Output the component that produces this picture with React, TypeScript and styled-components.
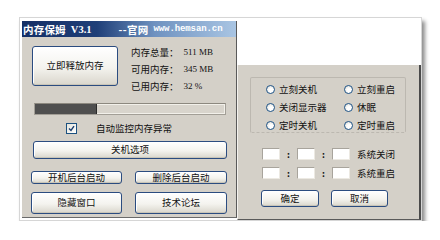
import * as React from 'react';
import styled, { createGlobalStyle } from 'styled-components';

const GlobalStyle = createGlobalStyle`
  body {
    margin: 0;
    background: #ffffff;
    font-family: "Noto Sans CJK SC", "Liberation Sans", sans-serif;
    color: #111111;
  }
`;

const Frame = styled('div')`
  display: flex;
  width: 401px;
  height: 202px;
  margin: 17px 0 0 19px;
  border: 1px solid #d6d6d6;
  background: #ffffff;
  box-shadow: 3px 4px 4px rgba(0, 0, 0, 0.45);
`;

const MainWindow = styled('section')`
  display: flex;
  flex-direction: column;
  width: 215px;
  height: 197px;
  margin: 3px 0 0 2px;
  background: #d4d0c8;
  border-right: 1px solid #5a5a5a;
  border-bottom: 1px solid #6a6a6a;
  box-sizing: border-box;
`;

const TitleBar = styled('div')`
  display: flex;
  align-items: center;
  height: 16px;
  padding-left: 1px;
  background: linear-gradient(to right, #142f66 0%, #1f3f78 35%, #6f92c0 62%, #a9c5e3 100%);
  color: #ffffff;
  font-weight: bold;
  white-space: nowrap;
`;

const TitleName = styled('span')`
  font-size: 10.5px;
  letter-spacing: 0.2px;
`;

const Version = styled('span')`
  margin-left: 5px;
  font-family: "Liberation Serif", serif;
  font-size: 10.5px;
`;

const SiteLabel = styled('span')`
  margin-left: 27px;
  font-size: 10.5px;
  letter-spacing: 0.3px;
`;

const SiteUrl = styled('span')`
  margin-left: 5px;
  font-family: "Liberation Mono", monospace;
  font-size: 9px;
  letter-spacing: -0.1px;
`;

const Body = styled('div')`
  display: flex;
  flex-direction: column;
  padding-top: 9px;
`;

const TopRow = styled('div')`
  display: flex;
  align-items: flex-start;
  padding-left: 10px;
`;

const Button = styled('button')<{ $w: number; $h: number }>`
  display: flex;
  align-items: center;
  justify-content: center;
  width: ${({ $w }) => $w}px;
  height: ${({ $h }) => $h}px;
  padding: 0;
  border: 1px solid #2b4c80;
  border-radius: 3px;
  background: linear-gradient(#ffffff 0%, #f4f3ee 55%, #d9d6cc 100%);
  box-shadow: inset 0 -1px 0 #c9c5b8, inset 1px 1px 0 #ffffff;
  font-family: "Noto Sans CJK SC", sans-serif;
  font-size: 9.5px;
  color: #111111;
  line-height: 1;
  box-sizing: border-box;
`;

const InfoList = styled('div')`
  display: flex;
  flex-direction: column;
  margin: -3px 0 0 13px;
`;

const InfoLine = styled('div')`
  display: flex;
  align-items: center;
  height: 17px;
  font-size: 9.5px;
`;

const InfoValue = styled('span')`
  margin-left: 5px;
  font-family: "Liberation Serif", serif;
  font-size: 9px;
`;

const Progress = styled('div')`
  width: 192px;
  height: 12px;
  margin: 9px 0 0 12px;
  border: 1px solid #a29e96;
  border-top-color: #8c887f;
  background: #d8d4cc;
  box-shadow: inset 0 0 0 1px #f2f0ea;
  box-sizing: border-box;
`;

const ProgressFill = styled('div')`
  height: 100%;
  background: #4f4f4f;
  border-right: 1px solid #2a2a2a;
`;

const CheckRow = styled('label')`
  display: flex;
  align-items: center;
  height: 12px;
  margin: 7px 0 0 44px;
  font-size: 9.5px;
`;

const CheckBox = styled('span')`
  display: flex;
  align-items: center;
  justify-content: center;
  width: 9px;
  height: 9px;
  margin-right: 19px;
  border: 1px solid #1c5180;
  background: linear-gradient(135deg, #e4e4dc, #ffffff);
`;

const WideRow = styled('div')`
  display: flex;
  margin: 7px 0 0 11px;
`;

const PairRow = styled('div')<{ $top: number }>`
  display: flex;
  gap: 13px;
  margin: ${({ $top }) => $top}px 0 0 9px;
`;

const Dialog = styled('section')`
  display: flex;
  flex-direction: column;
  width: 184px;
`;

const Blank = styled('div')`
  height: 47px;
  background: #ffffff;
`;

const DialogBody = styled('div')`
  display: flex;
  flex-direction: column;
  flex: 1;
  background: #d4d0c8;
  border-left: 1px solid #f4f2ee;
  border-right: 2px solid #4a4a4a;
  border-bottom: 1px solid #5a5a5a;
  padding-top: 12px;
`;

const GroupBox = styled('div')`
  display: grid;
  grid-template-columns: 78px 1fr;
  grid-auto-rows: 18px;
  width: 156px;
  height: 56px;
  margin-left: 12px;
  padding: 2px 0 0 15px;
  border: 1px solid #bcb8b0;
  border-bottom-style: dashed;
  border-radius: 2px;
  box-sizing: border-box;
`;

const RadioItem = styled('label')`
  display: flex;
  align-items: center;
  font-size: 9.5px;
`;

const RadioDot = styled('span')`
  width: 9px;
  height: 9px;
  margin-right: 4px;
  border: 1px solid #1f5488;
  border-radius: 50%;
  background: radial-gradient(circle at 60% 65%, #ffffff 30%, #d9d8d0 100%);
  box-sizing: border-box;
`;

const TimeRow = styled('div')<{ $top: number }>`
  display: flex;
  align-items: center;
  height: 12px;
  margin: ${({ $top }) => $top}px 0 0 24px;
  font-size: 9.5px;
`;

const TimeBox = styled('span')`
  width: 18px;
  height: 12px;
  background: #ffffff;
  border: 1px solid #a8a49c;
  border-right-color: #ece9e2;
  border-bottom-color: #ece9e2;
  box-sizing: border-box;
`;

const Colon = styled('span')`
  width: 17px;
  text-align: center;
  font-weight: bold;
  font-size: 9px;
`;

const TimeLabel = styled('span')`
  margin-left: 7px;
`;

const DialogButtons = styled('div')`
  display: flex;
  gap: 12px;
  margin: 11px 0 0 23px;
`;

const CheckMark = () => (
  <svg width="7" height="7" viewBox="0 0 7 7">
    <path d="M1 3.5 L3 5.5 L6 1.2" fill="none" stroke="#1b3e6f" strokeWidth="1.4" />
  </svg>
);

const Radio = ({ label }: { label: string }) => (
  <RadioItem>
    <RadioDot />
    {label}
  </RadioItem>
);

const TimeInput = ({ label, top }: { label: string; top: number }) => (
  <TimeRow $top={top}>
    <TimeBox />
    <Colon>:</Colon>
    <TimeBox />
    <Colon>:</Colon>
    <TimeBox />
    <TimeLabel>{label}</TimeLabel>
  </TimeRow>
);

const stats = { total: 511, free: 345, used: 32 };

const App = () => {
  return (
    <>
      <GlobalStyle />
      <Frame>
        <MainWindow>
          <TitleBar>
            <TitleName>内存保姆</TitleName>
            <Version>V3.1</Version>
            <SiteLabel>--官网</SiteLabel>
            <SiteUrl>www.hemsan.cn</SiteUrl>
          </TitleBar>
          <Body>
            <TopRow>
              <Button $w={86} $h={40}>立即释放内存</Button>
              <InfoList>
                <InfoLine>内存总量：<InfoValue>{stats.total} MB</InfoValue></InfoLine>
                <InfoLine>可用内存：<InfoValue>{stats.free} MB</InfoValue></InfoLine>
                <InfoLine>已用内存：<InfoValue>{stats.used} %</InfoValue></InfoLine>
              </InfoList>
            </TopRow>
            <Progress>
              <ProgressFill style={{ width: `${stats.used}%` }} />
            </Progress>
            <CheckRow>
              <CheckBox><CheckMark /></CheckBox>
              自动监控内存异常
            </CheckRow>
            <WideRow>
              <Button $w={194} $h={18}>关机选项</Button>
            </WideRow>
            <PairRow $top={12}>
              <Button $w={91} $h={13}>开机后台启动</Button>
              <Button $w={92} $h={13}>删除后台启动</Button>
            </PairRow>
            <PairRow $top={8}>
              <Button $w={91} $h={22}>隐藏窗口</Button>
              <Button $w={92} $h={22}>技术论坛</Button>
            </PairRow>
          </Body>
        </MainWindow>
        <Dialog>
          <Blank />
          <DialogBody>
            <GroupBox>
              <Radio label="立刻关机" />
              <Radio label="立刻重启" />
              <Radio label="关闭显示器" />
              <Radio label="休眠" />
              <Radio label="定时关机" />
              <Radio label="定时重启" />
            </GroupBox>
            <TimeInput label="系统关闭" top={15} />
            <TimeInput label="系统重启" top={7} />
            <DialogButtons>
              <Button $w={58} $h={17}>确定</Button>
              <Button $w={57} $h={17}>取消</Button>
            </DialogButtons>
          </DialogBody>
        </Dialog>
      </Frame>
    </>
  );
};

export default App;
